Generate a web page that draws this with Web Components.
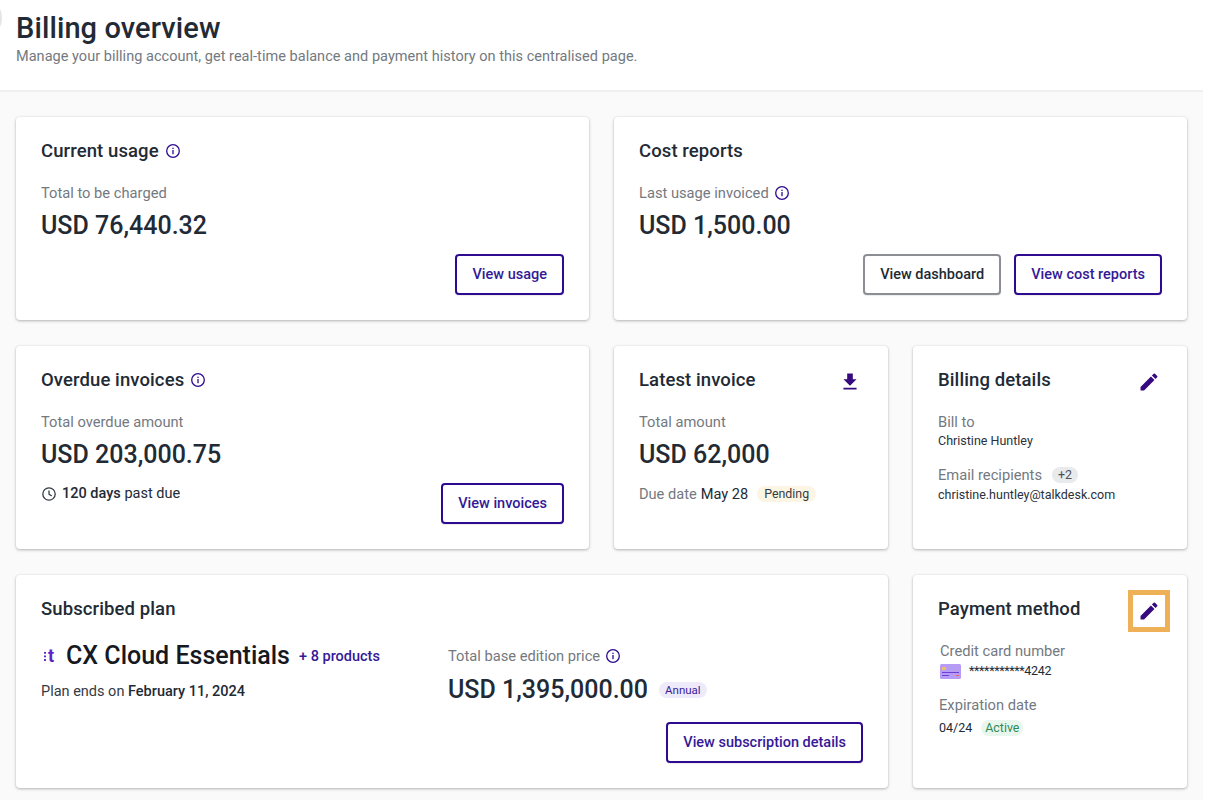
<!DOCTYPE html>
<html lang="en"><head><meta charset="utf-8"><title>Billing overview</title>
<style>html,body{margin:0;padding:0;background:#fff;font-family:Roboto,sans-serif;}</style>
</head><body>
<billing-page>
  <page-header slot="header" heading="Billing overview" sub="Manage your billing account, get real-time balance and payment history on this centralised page."></page-header>

  <bill-card span="2" heading="Current usage" info>
    <bill-label>Total to be charged</bill-label>
    <bill-amount>USD 76,440.32</bill-amount>
    <bill-actions slot="actions"><bill-button>View usage</bill-button></bill-actions>
  </bill-card>

  <bill-card span="2" heading="Cost reports">
    <bill-label info>Last usage invoiced</bill-label>
    <bill-amount>USD 1,500.00</bill-amount>
    <bill-actions slot="actions"><bill-button variant="grey">View dashboard</bill-button><bill-button>View cost reports</bill-button></bill-actions>
  </bill-card>

  <bill-card span="2" heading="Overdue invoices" info>
    <bill-label>Total overdue amount</bill-label>
    <bill-amount>USD 203,000.75</bill-amount>
    <bill-overdue><b>120 days</b> past due</bill-overdue>
    <bill-actions slot="actions"><bill-button>View invoices</bill-button></bill-actions>
  </bill-card>

  <bill-card heading="Latest invoice" action="download">
    <bill-label>Total amount</bill-label>
    <bill-amount>USD 62,000</bill-amount>
    <due-line>Due date <span>May 28</span> <bill-chip tone="amber">Pending</bill-chip></due-line>
  </bill-card>

  <bill-card heading="Billing details" action="edit">
    <detail-list>
      <bill-detail label="Bill to">Christine Huntley</bill-detail>
      <bill-detail label="Email recipients" chip="+2">christine.huntley@talkdesk.com</bill-detail>
    </detail-list>
  </bill-card>

  <bill-card span="3" heading="Subscribed plan" class="plan">
    <plan-summary></plan-summary>
    <bill-actions slot="actions"><bill-button>View subscription details</bill-button></bill-actions>
  </bill-card>

  <bill-card heading="Payment method" action="edit" highlight>
    <payment-info></payment-info>
  </bill-card>
</billing-page>

<script>
const INFO = s => `<svg width="${s}" height="${s}" viewBox="0 0 16 16" fill="none" aria-hidden="true"><circle cx="8" cy="8" r="6.3" stroke="#2e0a8f" stroke-width="1.3"/><rect x="7.35" y="7" width="1.3" height="4.2" fill="#2e0a8f"/><rect x="7.35" y="4.7" width="1.3" height="1.3" fill="#2e0a8f"/></svg>`;
const EDIT = `<svg width="24" height="24" viewBox="0 0 24 24" aria-hidden="true"><path fill="#36097f" d="M3 17.25V21h3.75L17.81 9.94l-3.75-3.75L3 17.25zM20.71 7.04a1 1 0 0 0 0-1.41l-2.34-2.34a1 1 0 0 0-1.41 0l-1.83 1.83 3.75 3.75 1.83-1.83z"/></svg>`;
const DOWNLOAD = `<svg width="24" height="24" viewBox="0 0 24 24" aria-hidden="true"><path fill="#36097f" d="M19 9h-4V3H9v6H5l7 7 7-7zM5 18v2h14v-2H5z"/></svg>`;
function def(name, css, html){
  customElements.define(name, class extends HTMLElement{
    constructor(){super();this.attachShadow({mode:'open'});}
    connectedCallback(){this.shadowRoot.innerHTML=`<style>${css}</style>${typeof html==='function'?html(this):html}`;}
  });
}
def('billing-page',`
  :host{display:block;width:1203px;height:800px;overflow:hidden;background:#fafafa;}
  .grid{display:grid;grid-template-columns:repeat(4,274px);column-gap:25px;row-gap:26px;padding:25px 16px 0;grid-auto-rows:203px;}
`,`<slot name="header"></slot><div class="grid"><slot></slot></div>`);
def('page-header',`
  :host{display:block;box-sizing:border-box;height:92px;background:#fff;border-bottom:2px solid #eff0f1;padding:9px 0 0 16px;position:relative;color:#1d2530;}
  h1{margin:0;font:500 29px/38px Roboto,sans-serif;letter-spacing:.1px;color:#222a35;}
  p{margin:1px 0 0;font:400 14.5px/18px Roboto,sans-serif;color:#73797f;letter-spacing:.03px;}
  .dot{position:absolute;left:-10px;top:6px;width:12px;height:24px;border-radius:50%;background:#e3e4e6;}
`,el=>`<div class="dot"></div><h1>${el.getAttribute('heading')}</h1><p>${el.getAttribute('sub')}</p>`);
customElements.define('bill-card', class extends HTMLElement{
  constructor(){super();this.attachShadow({mode:'open'});}
  connectedCallback(){
    const span=this.getAttribute('span')||1, act=this.getAttribute('action');
    this.style.gridColumn=`span ${span}`;
    if(this.classList.contains('plan')||this.hasAttribute('highlight')) this.style.height='213px';
    const icon=act==='edit'?EDIT:act==='download'?DOWNLOAD:'';
    this.shadowRoot.innerHTML=`<style>
      :host{display:flex;flex-direction:column;box-sizing:border-box;background:#fff;border-radius:4px;padding:22px 25px 25px;box-shadow:0 1px 3px rgba(30,35,45,.32),0 0 2px rgba(30,35,45,.06);position:relative;color:#1b2530;}
      header{display:flex;align-items:center;height:24px;gap:6px;margin-bottom:20px;}
      h2{margin:0;font:500 18.5px/24px Roboto,sans-serif;color:#222a35;letter-spacing:.1px;}
      .act{position:absolute;right:26px;top:24px;width:24px;height:24px;display:flex;}
      .act.hl{outline:5px solid #eeb157;outline-offset:4px;}
      .act svg{transform:scale(.94);}
      .body{flex:1;min-height:0;}
      .actions{display:flex;justify-content:flex-end}
      .info{display:flex;}
    </style>
    <header><h2>${this.getAttribute('heading')}</h2>${this.hasAttribute('info')?`<span class="info">${INFO(16)}</span>`:''}</header>
    ${icon?`<div class="act ${this.hasAttribute('highlight')?'hl':''}">${icon}</div>`:''}
    <div class="body"><slot></slot></div>
    <div class="actions"><slot name="actions"></slot></div>`;
  }
});
def('bill-label',`:host{display:flex;align-items:center;gap:5px;font:400 14.7px/20px Roboto,sans-serif;color:#73797f;}.i{display:flex}`,
  el=>`<slot></slot>${el.hasAttribute('info')?`<span class="i">${INFO(16)}</span>`:''}`);
def('bill-amount',`:host{display:block;margin-top:7px;font:500 25px/32px Roboto,sans-serif;color:#222a35;}`,`<slot></slot>`);
def('bill-actions',`:host{display:flex;gap:13px;}`,`<slot></slot>`);
def('bill-button',`
  :host{display:inline-flex;align-items:center;justify-content:center;box-sizing:border-box;height:41px;padding:1px 15px 0;border:2px solid #2e0a8f;border-radius:4px;font:500 14.5px/20px Roboto,sans-serif;color:#341a96;background:#fff;white-space:nowrap;box-shadow:0 1px 1px rgba(0,0,0,.08);}
  :host([variant=grey]){border-color:#8b8f94;color:#222a35;}
`,`<slot></slot>`);
def('bill-overdue',`:host{display:flex;align-items:center;gap:5px;margin-top:13px;font:400 14.5px/20px Roboto,sans-serif;color:#222a35;}::slotted(b){font-weight:500}.t{display:flex}`,
  `<span class="t"><svg width="16" height="16" viewBox="0 0 16 16" fill="none"><circle cx="8" cy="8" r="6.2" stroke="#353b44" stroke-width="1.3"/><path d="M8 4.4V8.2l2.7 1.7" stroke="#353b44" stroke-width="1.3"/></svg></span><span><slot></slot></span>`);
def('due-line',`:host{display:flex;align-items:center;gap:4px;margin-top:13px;font:400 14.6px/20px Roboto,sans-serif;color:#73797f;}::slotted(span){color:#222a35;margin-right:5px}`,`<slot></slot>`);
def('bill-chip',`:host{display:inline-flex;align-items:center;height:16px;padding:0 7px;border-radius:8px;font:400 12.4px/16px Roboto,sans-serif;white-space:nowrap}
  :host([tone=amber]){background:#fdf5e3;color:#353b44}
  :host([tone=green]){background:#e9f6ee;color:#2f8a55;padding:0 4px}
  :host([tone=violet]){background:#efeafa;color:#3d1a9a;font-size:11.5px;padding:0 6px}
  :host([tone=grey]){background:#e9eaec;color:#4b5159;padding:0 6px}`,`<slot></slot>`);
def('detail-list',`:host{display:flex;flex-direction:column;gap:15px;}`,`<slot></slot>`);
def('bill-detail',`:host{display:block}
  .l{display:flex;align-items:center;gap:10px;font:400 14.7px/20px Roboto,sans-serif;color:#73797f;}
  .v{font:400 12.5px/18px Roboto,sans-serif;color:#2a313a;margin-top:0}
  :host([chip]) .v{margin-top:1px}`,
  el=>`<div class="l">${el.getAttribute('label')}${el.getAttribute('chip')?`<bill-chip tone="grey">${el.getAttribute('chip')}</bill-chip>`:''}</div><div class="v"><slot></slot></div>`);
def('plan-summary',`:host{display:grid;grid-template-columns:407px 1fr;margin-top:-3px}
  .name{display:flex;align-items:center;height:36px;}
  .logo{font:700 18px/20px Roboto,sans-serif;color:#5a24c9;width:25px;display:flex;align-items:center;gap:2px;height:20px;padding-left:3px;box-sizing:border-box}
  .dots{display:inline-block;width:2px;height:10px;background:radial-gradient(circle,#5a24c9 1px,transparent 1.1px) 0 0/2px 3.6px;}
  h3{margin:0;font:500 25px/32px Roboto,sans-serif;color:#15191f;}
  a{margin-left:9px;font:500 14.5px/20px Roboto,sans-serif;color:#341a96;position:relative;top:1px}
  .ends{margin-top:8px;font:400 14.5px/20px Roboto,sans-serif;color:#353b44}
  .ends b{font-weight:500;color:#222a35}
  .lab{display:flex;align-items:center;gap:5px;font:400 14.7px/20px Roboto,sans-serif;color:#73797f;height:20px;margin-top:8px}
  .lab span{display:flex}
  .amt{display:flex;align-items:center;gap:11px;margin-top:8px;font:500 25px/32px Roboto,sans-serif;color:#222a35;}
`,`<div><div class="name"><span class="logo"><i class="dots"></i><span>t</span></span><h3>CX Cloud Essentials</h3><a>+ 8 products</a></div><div class="ends">Plan ends on <b>February 11, 2024</b></div></div>
  <div><div class="lab">Total base edition price <span>${INFO(16)}</span></div><div class="amt">USD 1,395,000.00 <bill-chip tone="violet">Annual</bill-chip></div></div>`);
def('payment-info',`:host{display:block;padding-left:2px;margin-top:0}
  .l{font:400 14.7px/20px Roboto,sans-serif;color:#73797f;}
  .row{display:flex;align-items:center;font:400 12.5px/18px Roboto,sans-serif;color:#222a35;margin-top:1px}
  .row svg{margin-right:8px}
  .row span{letter-spacing:-.35px}
  .exp{margin-top:15px;margin-left:-1px}
  .d{display:flex;align-items:center;gap:9px;font:400 12.5px/18px Roboto,sans-serif;color:#222a35;margin-top:4px}
`,`<div class="l">Credit card number</div>
  <div class="row"><svg width="21" height="15" viewBox="0 0 21 15"><rect width="21" height="15" rx="1.5" fill="#b79cf5"/><rect x="2" y="3" width="4" height="3" rx=".5" fill="#eec05f"/><rect x="2" y="8" width="17" height="1" fill="#6f40d8"/><rect x="2" y="11" width="7" height="1" fill="#6f40d8"/><rect x="16" y="11" width="3" height="1" fill="#e2685a"/></svg><span>***********4242</span></div>
  <div class="exp"><div class="l">Expiration date</div><div class="d">04/24 <bill-chip tone="green">Active</bill-chip></div></div>`);
</script>
</body></html>
